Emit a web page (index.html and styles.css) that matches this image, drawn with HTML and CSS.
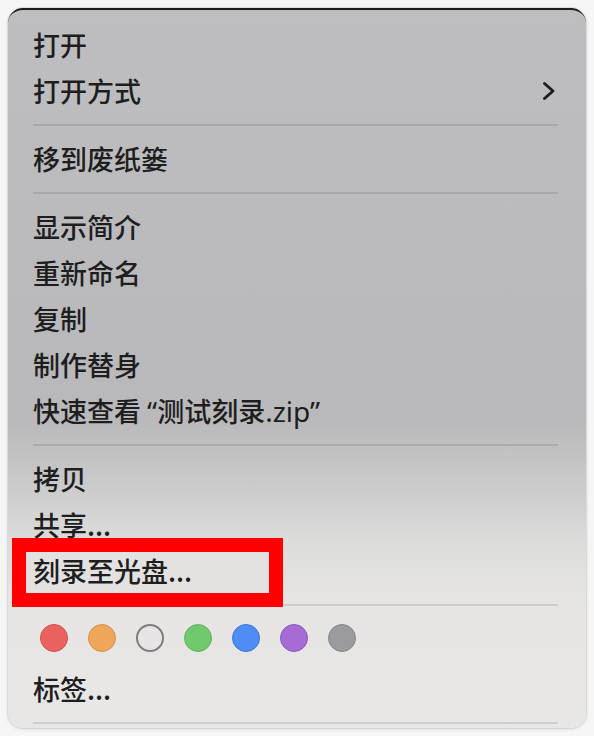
FILE: index.html
```html
<!DOCTYPE html>
<html lang="zh-CN">
<head>
<meta charset="utf-8">
<title>菜单</title>
<link rel="stylesheet" href="styles.css">
</head>
<body>
<div class="menu">
  <div class="item">打开</div>
  <div class="item submenu">
    <span>打开方式</span>
    <svg class="chevron" width="14" height="20" viewBox="0 0 14 20"><polyline points="2.5,2.5 11,10 2.5,17.5" fill="none" stroke="#1f1f1f" stroke-width="3" stroke-linecap="round" stroke-linejoin="round"/></svg>
  </div>
  <div class="sep"></div>
  <div class="item">移到废纸篓</div>
  <div class="sep"></div>
  <div class="item">显示简介</div>
  <div class="item">重新命名</div>
  <div class="item">复制</div>
  <div class="item">制作替身</div>
  <div class="item">快速查看&nbsp;<span class="latin">“</span>测试刻录<span class="latin">.zip”</span></div>
  <div class="sep"></div>
  <div class="item">拷贝</div>
  <div class="item">共享...</div>
  <div class="item marked"><span class="label">刻录至光盘...</span></div>
  <div class="sep"></div>
  <div class="tags">
    <span class="dot red"></span>
    <span class="dot orange"></span>
    <span class="dot none"></span>
    <span class="dot green"></span>
    <span class="dot blue"></span>
    <span class="dot purple"></span>
    <span class="dot gray"></span>
  </div>
  <div class="item">标签...</div>
  <div class="sep"></div>
</div>
</body>
</html>
```

FILE: styles.css
```css
html, body {
  margin: 0;
  padding: 0;
}
body {
  background: #f6f6f6;
  width: 594px;
  height: 736px;
  overflow: hidden;
  font-family: "Noto Sans CJK SC", "Noto Sans", sans-serif;
}
.menu {
  position: relative;
  box-sizing: border-box;
  margin: 8px 0 0 8px;
  width: 578px;
  height: 720px;
  padding: 12px 28px 0 25px;
  overflow: hidden;
  border-radius: 15px;
  border-top: 2px solid #1c1c1c;
  background: linear-gradient(to bottom,
    #bebec1 0%,
    #bababd 40%,
    #b9b9bb 57%,
    #c8c8c9 65%,
    #dcdcdb 74%,
    #e6e5e4 82%,
    #e8e7e6 100%);
  box-shadow: 0 0 0 1px rgba(0, 0, 0, 0.07), 0 1px 4px rgba(0, 0, 0, 0.12);
  color: #1e1e1e;
}
.item {
  height: 46px;
  display: flex;
  align-items: center;
  font-size: 27px;
  font-weight: 500;
  line-height: 46px;
  white-space: nowrap;
}
.latin {
  font-family: "Noto Sans", "Liberation Sans", sans-serif;
  font-weight: 400;
  font-size: 28px;
}
.submenu {
  justify-content: space-between;
}
.chevron {
  margin-right: 2px;
}
.sep {
  height: 22px;
  display: flex;
  align-items: center;
}
.sep::before {
  content: "";
  display: block;
  width: 100%;
  height: 2px;
  background: rgba(0, 0, 0, 0.1);
}
.marked {
  position: relative;
}
.marked::before {
  content: "";
  position: absolute;
  left: -21px;
  top: -10px;
  width: 243px;
  height: 41px;
  border: 14px solid #ff0000;
  background: #e3e2e1;
}
.marked .label {
  position: relative;
}
.tags {
  height: 50px;
  display: flex;
  align-items: flex-start;
  gap: 20px;
  padding: 8px 0 0 7px;
  box-sizing: border-box;
}
.dot {
  box-sizing: border-box;
  width: 28px;
  height: 28px;
  border-radius: 50%;
  border: 1.5px solid;
}
.red { background: #e9625f; border-color: #d24e4b; }
.orange { background: #eea65b; border-color: #d98f42; }
.none { background: transparent; border-color: #7d7d7f; border-width: 2px; }
.green { background: #70c96c; border-color: #5cb359; }
.blue { background: #4f8df4; border-color: #3a77df; }
.purple { background: #a66bd5; border-color: #9056c0; }
.gray { background: #9b9a9d; border-color: #878689; }
```
